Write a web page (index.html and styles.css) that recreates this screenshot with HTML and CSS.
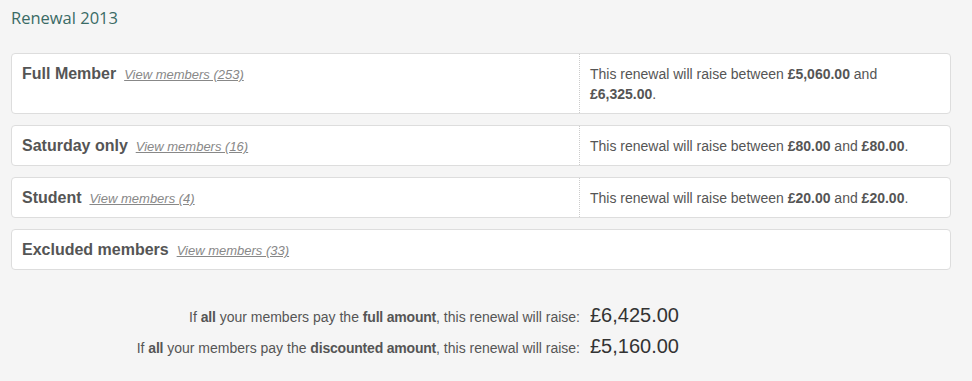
FILE: index.html
```html
<!DOCTYPE html>
<html lang="en">
<head>
  <meta charset="UTF-8">
  <title>Renewal 2013</title>
  <link rel="stylesheet" href="styles.css">
</head>
<body>
  <div class="page">
    <h2 class="page-title">Renewal 2013</h2>

    <div class="plan-list">
      <div class="plan">
        <div class="plan-name"><strong>Full Member</strong> <a href="#" class="plan-link">View members (253)</a></div>
        <div class="plan-raise">This renewal will raise between <strong>£5,060.00</strong> and <strong>£6,325.00</strong>.</div>
      </div>
      <div class="plan">
        <div class="plan-name"><strong>Saturday only</strong> <a href="#" class="plan-link">View members (16)</a></div>
        <div class="plan-raise">This renewal will raise between <strong>£80.00</strong> and <strong>£80.00</strong>.</div>
      </div>
      <div class="plan">
        <div class="plan-name"><strong>Student</strong> <a href="#" class="plan-link">View members (4)</a></div>
        <div class="plan-raise">This renewal will raise between <strong>£20.00</strong> and <strong>£20.00</strong>.</div>
      </div>
      <div class="plan plan-single">
        <div class="plan-name"><strong>Excluded members</strong> <a href="#" class="plan-link">View members (33)</a></div>
      </div>
    </div>

    <div class="totals">
      <div class="total-label">If <strong>all</strong> your members pay the <strong>full amount</strong>, this renewal will raise:</div>
      <div class="total-value">£6,425.00</div>
      <div class="total-label">If <strong>all</strong> your members pay the <strong>discounted amount</strong>, this renewal will raise:</div>
      <div class="total-value">£5,160.00</div>
    </div>
  </div>
</body>
</html>
```

FILE: styles.css
```css
* {
  margin: 0;
  padding: 0;
  box-sizing: border-box;
}
body {
  background-color: #f5f5f5;
  color: #555;
  font-family: 'Liberation Sans', Arial, sans-serif;
  font-size: 14px;
  line-height: 20px;
}
.page {
  width: 940px;
  margin-left: 11px;
  padding-top: 7px;
}
.page-title {
  font-family: 'Open Sans', sans-serif;
  font-weight: 500;
  font-size: 16.5px;
  line-height: 22px;
  color: #3a6b65;
  margin-bottom: 24px;
}
.plan-list {
  display: flex;
  flex-direction: column;
  gap: 11px;
}
.plan {
  display: grid;
  grid-template-columns: 568px 1fr;
  background: white;
  border: 1px solid #ddd;
  border-radius: 4px;
}
.plan-single {
  grid-template-columns: 1fr;
}
.plan-name {
  padding: 10px 10px 9px;
  border-right: 1px dotted #ccc;
}
.plan-single .plan-name {
  border-right: none;
}
.plan-name strong {
  font-size: 16px;
  line-height: 1;
  color: #555;
  margin-right: 4px;
}
.plan-link {
  font-size: 13px;
  line-height: 1;
  font-style: italic;
  color: #888;
}
.plan-raise {
  padding: 10px 10px 9px;
}
.totals {
  display: grid;
  grid-template-columns: 569px auto;
  column-gap: 10px;
  align-items: baseline;
  margin-top: 34px;
  row-gap: 8px;
}
.total-label {
  text-align: right;
  font-size: 14px;
}
.total-label strong {
  letter-spacing: -0.2px;
}
.total-value {
  font-size: 20px;
  line-height: 23px;
  color: #333;
}
```
